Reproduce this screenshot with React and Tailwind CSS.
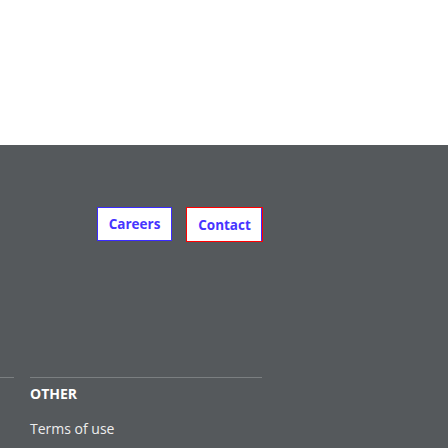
import React from 'react';

const App = () => {
  return (
    <div className="h-[448px] w-[448px] overflow-hidden bg-[#55595c]" style={{ fontFamily: '"Open Sans", "Noto Sans", sans-serif' }}>
      <div className="h-[145px] bg-white"></div>

      <div className="flex gap-[14px] pl-[97px] pt-[62px]">
        <button className="h-[34px] w-[75px] border border-[#3b2bff] bg-white pt-[1px] text-[13.5px] font-bold text-[#4634ff]">
          Careers
        </button>
        <button className="h-[35px] w-[77px] border border-[#ff0000] bg-white pt-[1px] text-[13.5px] font-bold text-[#4634ff] shadow-[inset_-1px_0_0_#3b2bff]">
          Contact
        </button>
      </div>

      <div className="mt-[135px] flex gap-[16px]">
        <div className="w-[14px] border-t border-[#7b7f81]"></div>
        <div className="w-[232px] border-t border-[#7b7f81]">
          <h3 className="mt-[7px] text-[14px] font-bold leading-[18px] text-white">OTHER</h3>
          <p className="mt-[17px] text-[14px] leading-[18px] text-[#eeeeee]">Terms of use</p>
        </div>
      </div>
    </div>
  );
};

export default App;
